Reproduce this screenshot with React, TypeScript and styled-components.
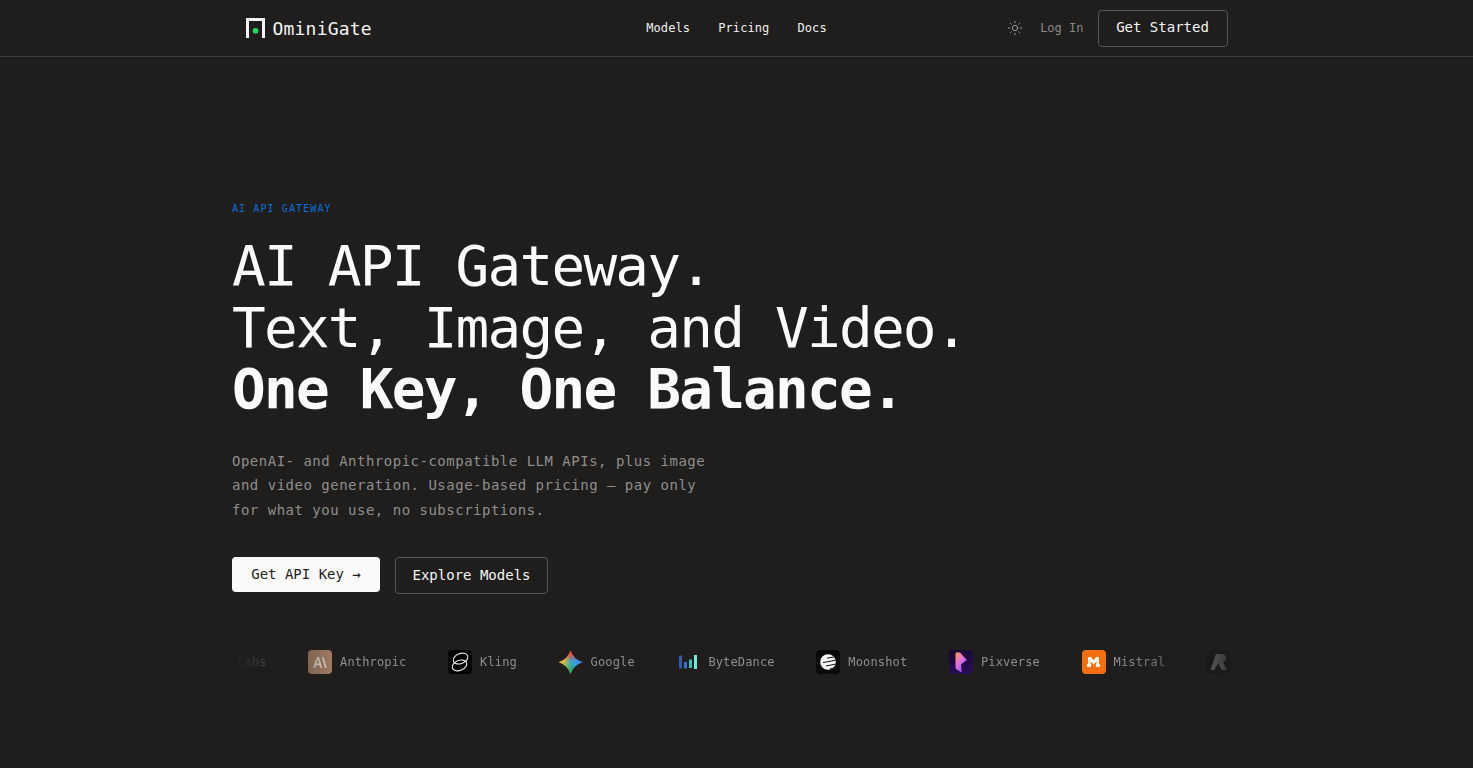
import React from "react";
import styled, { createGlobalStyle } from "styled-components";
import { Sun } from "lucide-react";

const mono = `"DejaVu Sans Mono", "Liberation Mono", monospace`;

const Global = createGlobalStyle`
  html, body { margin: 0; padding: 0; background: #1f1e1d; }
  body { font-family: ${mono}; color: #fafafa; overflow: hidden; }
  * { box-sizing: border-box; }
`;

const Page = styled.div`
  width: 100%;
  height: 768px;
  overflow: hidden;
  background: #1f1e1d;
`;

const Header = styled.header`
  height: 57px;
  border-bottom: 1px solid #3c3b39;
`;

const HeaderInner = styled.div`
  max-width: 982px;
  height: 56px;
  margin: 0 auto;
  display: grid;
  grid-template-columns: 1fr auto 1fr;
  align-items: center;
`;

const Brand = styled.div`
  display: flex;
  align-items: center;
  gap: 8px;
  font-size: 18px;
  letter-spacing: 0.2px;
  color: #f5f5f4;
`;

const Nav = styled.nav`
  display: flex;
  gap: 28px;
  font-size: 12px;
  letter-spacing: 0.1px;
  color: #f0f0ef;
`;

const Actions = styled.div`
  display: flex;
  align-items: center;
  justify-content: flex-end;
  gap: 14px;
  color: #8f8e8c;
  font-size: 12px;
`;

const ThemeButton = styled.span`
  display: flex;
  margin-right: 3px;
  color: #9a9997;
`;

const LogIn = styled.span`
  color: #8a8987;
`;

const Button = styled.button<{ $primary?: boolean; $w: number; $h: number }>`
  display: inline-flex;
  align-items: center;
  justify-content: center;
  width: ${(p) => p.$w}px;
  height: ${(p) => p.$h}px;
  padding: 0 0 2px;
  border-radius: 4px;
  font-family: ${mono};
  font-size: 14px;
  border: ${(p) => (p.$primary ? "0" : "1px solid #575654")};
  background: ${(p) => (p.$primary ? "#fafafa" : "transparent")};
  color: ${(p) => (p.$primary ? "#1f1e1d" : "#f5f5f4")};
`;

const Hero = styled.main`
  max-width: 1009px;
  margin: 0 auto;
  padding-top: 146px;
`;

const Eyebrow = styled.div`
  font-size: 10px;
  line-height: 12px;
  letter-spacing: 1.1px;
  color: #0a6fdc;
`;

const Title = styled.h1`
  margin: 20px 0 0;
  font-size: 56px;
  line-height: 61.6px;
  font-weight: 400;
  letter-spacing: -1.77px;
  color: #fafafa;
`;

const Strong = styled.span`
  font-weight: 700;
`;

const Lead = styled.p`
  margin: 29px 0 0;
  font-size: 14px;
  line-height: 24.5px;
  letter-spacing: 0.5px;
  color: #8f8e8c;
  max-width: 490px;
`;

const Cta = styled.div`
  display: flex;
  align-items: flex-start;
  gap: 15px;
  margin-top: 35px;
`;

const Marquee = styled.div`
  margin-top: 56px;
  width: 1000px;
  overflow: hidden;
  mask-image: linear-gradient(to right, transparent 0, #000 100px, #000 890px, transparent 1020px);
`;

const Track = styled.div`
  display: flex;
  align-items: center;
  gap: 41.6px;
  margin-left: 5px;
  width: max-content;
`;

const Item = styled.div`
  display: flex;
  align-items: center;
  gap: 8px;
  font-size: 12px;
  letter-spacing: 0.15px;
  color: #8f8e8c;
`;

const Tile = styled.span<{ $bg: string }>`
  width: 24px;
  height: 24px;
  flex: none;
  display: flex;
  align-items: center;
  justify-content: center;
  border-radius: 4px;
  background: ${(p) => p.$bg};
`;

const GoogleStar = styled.span`
  width: 24px;
  height: 24px;
  flex: none;
  background:
    radial-gradient(circle at 50% 50%, #35a8c8 0, rgba(53, 168, 200, 0) 45%),
    conic-gradient(from 0deg, #ea4a3c 0deg, #4a80f0 70deg, #3a98e8 120deg, #2aa866 180deg, #a8c640 240deg, #f7b52a 280deg, #ea4a3c 360deg);
  clip-path: path("M12 0 Q15 9 24 12 Q15 15 12 24 Q9 15 0 12 Q9 9 12 0 Z");
`;

const LogoMark = () => (
  <svg width="19" height="20" viewBox="0 0 19 20" aria-hidden>
    <path d="M0 20V0H19V20H16V3H3V20Z" fill="#f5f5f4" />
    <circle cx="9.5" cy="12.8" r="2.9" fill="#22d35e" />
  </svg>
);

const AnthropicIcon = () => (
  <svg width="14" height="11" viewBox="0 0 16 12" aria-hidden>
    <path d="M4.5 0H7L10.5 12H8.4L7.6 9H3.4L2.4 12H0.2ZM4 7.2H7.1L5.6 2Z" fill="#d3ccc5" />
    <path d="M10 0H12L15.8 12H13.6Z" fill="#d3ccc5" />
  </svg>
);

const KlingIcon = () => (
  <svg width="22" height="22" viewBox="0 0 22 22" fill="none" stroke="#e8e8e8" strokeWidth="1.1" aria-hidden>
    <ellipse cx="11.5" cy="7.6" rx="7.6" ry="5" transform="rotate(-22 11.5 7.6)" />
    <ellipse cx="10.5" cy="14.4" rx="7.6" ry="5" transform="rotate(-22 10.5 14.4)" />
  </svg>
);

const ByteDanceIcon = () => (
  <svg width="18" height="14" viewBox="0 0 18 14" aria-hidden>
    <rect x="0" y="0.5" width="3" height="13" fill="#325ab4" />
    <rect x="5" y="7" width="3" height="6.5" fill="#3a6fc8" />
    <rect x="10" y="4.5" width="3" height="8.5" fill="#3cc0bc" />
    <rect x="15" y="0" width="3" height="14" fill="#78e6d8" />
  </svg>
);

const MoonshotIcon = () => (
  <svg width="20" height="20" viewBox="0 0 20 20" aria-hidden>
    <defs>
      <clipPath id="moon-disc">
        <circle cx="10" cy="10" r="7.8" />
      </clipPath>
    </defs>
    <g clipPath="url(#moon-disc)">
      <rect width="20" height="20" fill="#f5f5f5" />
      <path d="M9 6.2L20 4.2M5 10.6L20 7.8M8 14L20 11.6M12 16.8L20 15.2" stroke="#111" strokeWidth="1" />
    </g>
  </svg>
);

const PixverseIcon = () => (
  <svg width="14" height="21" viewBox="0 0 12 20" aria-hidden>
    <defs>
      <linearGradient id="pix-g" x1="0" y1="0" x2="0.7" y2="1">
        <stop offset="0" stopColor="#ff9c5a" />
        <stop offset="0.5" stopColor="#e070e0" />
        <stop offset="1" stopColor="#8a50f0" />
      </linearGradient>
    </defs>
    <path d="M2 0.5H5L11.5 7.5L6 12L6.8 19.5L2.2 16.8C1.2 16.2 0.8 15.4 0.8 14.4V1.8C0.8 1 1.2 0.5 2 0.5Z" fill="url(#pix-g)" />
  </svg>
);

const MistralIcon = () => (
  <svg width="13" height="10" viewBox="0 0 14 11" aria-hidden>
    <path d="M1 0H4.2L7 3.4L9.8 0H13V7.6H14V11H9.6V7.6H10.2V5L7 8.5L3.8 5V7.6H4.4V11H0V7.6H1Z" fill="#fff6ea" />
  </svg>
);

const RunwayIcon = () => (
  <svg width="18" height="18" viewBox="0 0 18 18" aria-hidden>
    <path d="M6 1H12C15 1 16 3 16 5C16 7 15 8.5 13 9L17 17H11.5L8.5 10L4 17H0.5Z" fill="#c4c3c1" />
  </svg>
);

export default function App() {
  return (
    <Page>
      <Global />
      <Header>
        <HeaderInner>
          <Brand>
            <LogoMark />
            OminiGate
          </Brand>
          <Nav>
            <span>Models</span>
            <span>Pricing</span>
            <span>Docs</span>
          </Nav>
          <Actions>
            <ThemeButton>
              <Sun size={16} strokeWidth={1.5} />
            </ThemeButton>
            <LogIn>Log In</LogIn>
            <Button $w={130} $h={37}>Get Started</Button>
          </Actions>
        </HeaderInner>
      </Header>
      <Hero>
        <Eyebrow>AI API GATEWAY</Eyebrow>
        <Title>
          AI API Gateway.
          <br />
          Text, Image, and Video.
          <br />
          <Strong>One Key, One Balance.</Strong>
        </Title>
        <Lead>
          OpenAI- and Anthropic-compatible LLM APIs, plus image and video generation. Usage-based pricing — pay only for what you use, no subscriptions.
        </Lead>
        <Cta>
          <Button $primary $w={148} $h={35}>Get API Key →</Button>
          <Button $w={153} $h={37}>Explore Models</Button>
        </Cta>
        <Marquee>
          <Track>
            <Item>Labs</Item>
            <Item>
              <Tile $bg="#a07a62"><AnthropicIcon /></Tile>
              Anthropic
            </Item>
            <Item>
              <Tile $bg="#000"><KlingIcon /></Tile>
              Kling
            </Item>
            <Item>
              <GoogleStar />
              Google
            </Item>
            <Item>
              <Tile $bg="transparent"><ByteDanceIcon /></Tile>
              ByteDance
            </Item>
            <Item>
              <Tile $bg="#0a0a0a"><MoonshotIcon /></Tile>
              Moonshot
            </Item>
            <Item>
              <Tile $bg="linear-gradient(160deg,#14082e,#2a0f5a)"><PixverseIcon /></Tile>
              Pixverse
            </Item>
            <Item>
              <Tile $bg="#f56e0f"><MistralIcon /></Tile>
              Mistral
            </Item>
            <Item>
              <Tile $bg="#111"><RunwayIcon /></Tile>
            </Item>
          </Track>
        </Marquee>
      </Hero>
    </Page>
  );
}
